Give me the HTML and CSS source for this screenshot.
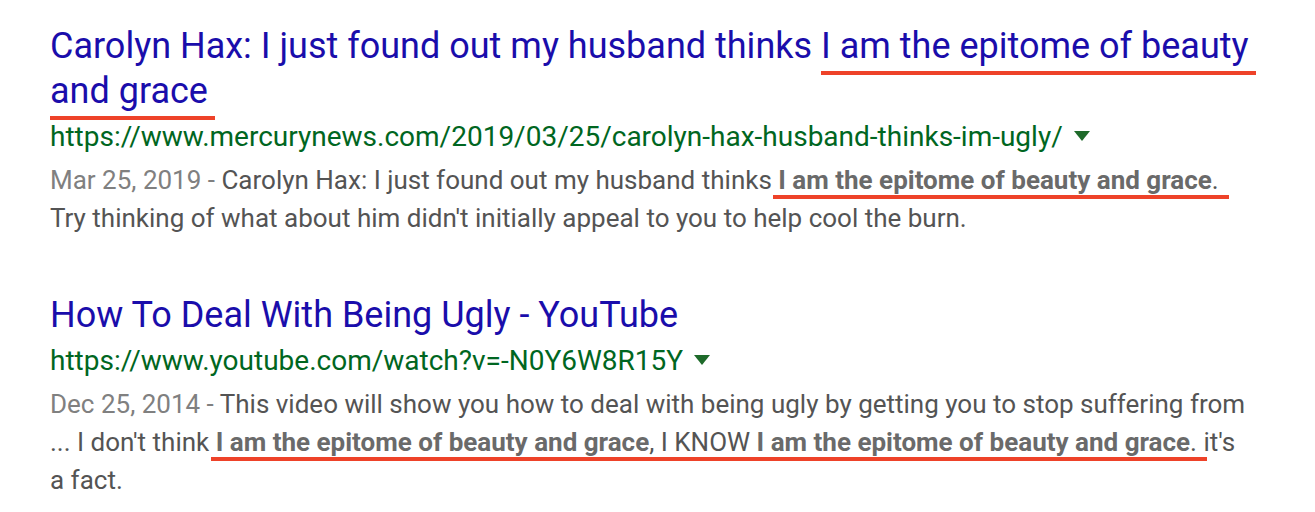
FILE: index.html
```html
<!DOCTYPE html>
<html lang="en">
<head>
<meta charset="utf-8">
<title>Search results</title>
<link rel="stylesheet" href="styles.css">
</head>
<body>
<main class="results">
  <article class="result">
    <h3 class="title"><a href="#">Carolyn Hax: I just found out my husband thinks <span class="mark">I am the epitome of beauty and grace</span></a></h3>
    <div class="url-row"><cite class="url">https://www.mercurynews.com/2019/03/25/carolyn-hax-husband-thinks-im-ugly/</cite><span class="caret"></span></div>
    <p class="snippet"><span class="date">Mar 25, 2019 - </span>Carolyn Hax: I just found out my husband thinks <span class="mark"><b>I am the epitome of beauty and grace</b>.</span> Try thinking of what about him didn't initially appeal to you to help cool the burn.</p>
  </article>
  <article class="result">
    <h3 class="title"><a href="#">How To Deal With Being Ugly - YouTube</a></h3>
    <div class="url-row"><cite class="url">https://www.youtube.com/watch?v=-N0Y6W8R15Y</cite><span class="caret"></span></div>
    <p class="snippet"><span class="date">Dec 25, 2014 - </span>This video will show you how to deal with being ugly by getting you to stop suffering from ... I don't think <span class="mark"><b>I am the epitome of beauty and grace</b>, I KNOW <b>I am the epitome of beauty and grace</b>.</span> it's a fact.</p>
  </article>
</main>
</body>
</html>
```
FILE: styles.css
```css
html, body {
  margin: 0;
  padding: 0;
  background: #ffffff;
}
body {
  font-family: Roboto, "Liberation Sans", Arial, sans-serif;
}
.results {
  padding: 24px 0 0 50px;
  width: 1225px;
}
.result + .result {
  margin-top: 56px;
}
.title {
  margin: 0;
  font-size: 36px;
  font-weight: 400;
  line-height: 45px;
}
.title a {
  color: #1a0dab;
  text-decoration: none;
}
.url-row {
  display: flex;
  align-items: center;
  margin-top: 6px;
  height: 34px;
}
.url {
  font-style: normal;
  font-size: 28px;
  color: #006621;
  line-height: 34px;
}
.caret {
  width: 0;
  height: 0;
  margin-left: 11px;
  margin-top: -2px;
  border-left: 8px solid transparent;
  border-right: 8px solid transparent;
  border-top: 10px solid #1e6a2a;
}
.snippet {
  margin: 7px 0 0;
  max-width: 1203px;
  font-size: 26px;
  line-height: 38px;
  color: #545454;
}
.snippet b {
  font-weight: 700;
  color: #6a6a6a;
}
.date {
  color: #808080;
}
.mark {
  padding: 0 10px 0 5px;
  margin: 0 -10px 0 -5px;
  border-bottom: 4px solid #ee4229;
  -webkit-box-decoration-break: clone;
  box-decoration-break: clone;
}
.title .mark {
  padding: 0 7px 4px 0;
  margin: 0 -7px 0 0;
}
```
